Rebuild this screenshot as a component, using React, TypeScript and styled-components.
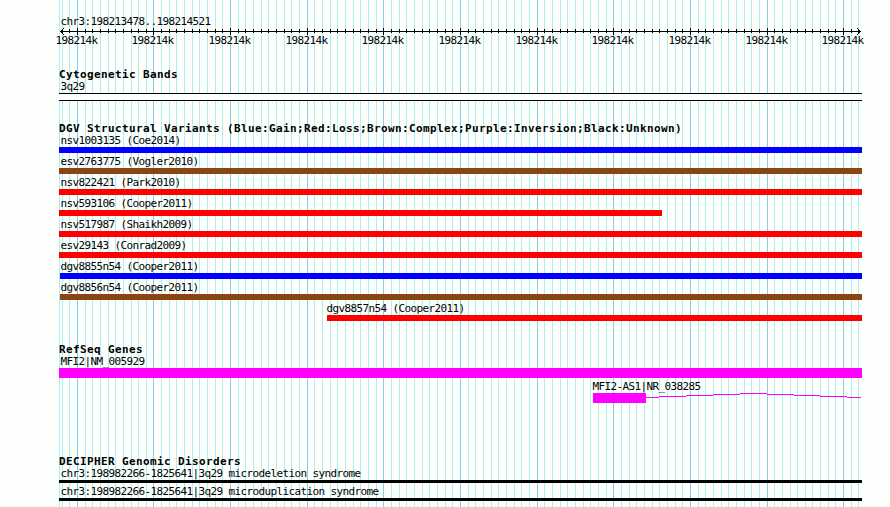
import React from "react";
import styled, { createGlobalStyle } from "styled-components";

interface Feature {
  label: string;
  color: string;
  start?: number;
  end?: number;
  labelOffset?: number;
  intron?: string;
}

interface TrackData {
  title: string;
  barHeight: number;
  gapBefore: number;
  features: Feature[];
}

const WIDTH = 890;
const HEIGHT = 507;
const LEFT = 59;
const RIGHT = 862;

const BACKGROUND = "#fdfffc";
const BLUE = "#0000ff";
const BROWN = "#8b4513";
const RED = "#ff0000";
const MAGENTA = "#ff00ff";
const BLACK = "#000000";

// 800 px cover 1044 bp, one grid line every 10 bp
const STEP = 8000 / 1044;
const FIRST_MAJOR = 76.361;

const gridLines = Array.from({ length: 105 }, (_, i) => {
  const k = i - 2;
  return { x: Math.ceil(FIRST_MAJOR + k * STEP), major: k % 10 === 0 };
});

const tracks: TrackData[] = [
  {
    title:
      "DGV Structural Variants (Blue:Gain;Red:Loss;Brown:Complex;Purple:Inversion;Black:Unknown)",
    barHeight: 6,
    gapBefore: 19,
    features: [
      { label: "nsv1003135 (Coe2014)", color: BLUE },
      { label: "esv2763775 (Vogler2010)", color: BROWN },
      { label: "nsv822421 (Park2010)", color: RED },
      { label: "nsv593106 (Cooper2011)", color: RED, end: 662 },
      { label: "nsv517987 (Shaikh2009)", color: RED },
      { label: "esv29143 (Conrad2009)", color: RED },
      { label: "dgv8855n54 (Cooper2011)", color: BLUE, start: 60, labelOffset: 0.5 },
      { label: "dgv8856n54 (Cooper2011)", color: BROWN, start: 60, labelOffset: 0.5 },
      { label: "dgv8857n54 (Cooper2011)", color: RED, start: 327, labelOffset: -0.5 },
    ],
  },
  {
    title: "RefSeq Genes",
    barHeight: 10,
    gapBefore: 20,
    features: [
      { label: "MFI2|NM_005929", color: MAGENTA },
      {
        label: "MFI2-AS1|NR_038285",
        color: MAGENTA,
        start: 593,
        end: 646,
        labelOffset: -0.5,
        intron:
          "M0 4.5H13M13 3.5H40M40 2.5H67M67 1.5H94M94 .5H121M121 1.5H148M148 2.5H174M174 3.5H201M201 4.5H215",
      },
    ],
  },
  {
    title: "DECIPHER Genomic Disorders",
    barHeight: 3,
    gapBefore: 50,
    features: [
      { label: "chr3:198982266-1825641|3q29 microdeletion syndrome", color: BLACK },
      { label: "chr3:198982266-1825641|3q29 microduplication syndrome", color: BLACK },
    ],
  },
];

const GlobalStyle = createGlobalStyle`
  html,
  body {
    margin: 0;
    background: ${BACKGROUND};
    overflow: hidden;
  }
`;

const Browser = styled.main`
  position: relative;
  box-sizing: border-box;
  width: ${WIDTH}px;
  height: ${HEIGHT}px;
  padding-top: 15px;
  overflow: hidden;
  background: ${BACKGROUND};
  color: ${BLACK};
  font-family: "DejaVu Sans Mono", "Liberation Mono", monospace;
  font-size: 11px;
  line-height: 14px;
`;

const GridLayer = styled.svg`
  position: absolute;
  inset: 0;
`;

const Content = styled.div`
  position: relative;
  display: flex;
  flex-direction: column;
`;

const Label = styled.div<{ $offset?: number }>`
  height: 12px;
  margin-left: ${(props) => props.$offset ?? 1.5}px;
  letter-spacing: -0.622px;
  white-space: pre;
`;

const RegionLabel = styled(Label)`
  margin-left: ${LEFT + 1.5}px;
`;

const RulerSvg = styled.svg`
  display: block;
  overflow: visible;

  text {
    letter-spacing: -0.622px;
  }
`;

const TrackSection = styled.section<{ $gap: number }>`
  margin-top: ${(props) => props.$gap}px;
`;

const TrackTitle = styled.h2`
  height: 12px;
  margin: 0 0 0 ${LEFT}px;
  font-size: 11px;
  font-weight: 700;
  letter-spacing: 0.378px;
  white-space: pre;
`;

const FeatureRow = styled.div<{ $start: number }>`
  margin: 0 0 2px ${(props) => props.$start}px;
`;

const Glyph = styled.div`
  display: flex;
  margin-top: 1px;
`;

const Bar = styled.div<{ $width: number; $height: number; $color: string }>`
  flex: none;
  width: ${(props) => props.$width}px;
  height: ${(props) => props.$height}px;
  background: ${(props) => props.$color};
`;

const Intron = styled.svg`
  flex: none;
`;

const CytoBand = styled.div`
  box-sizing: border-box;
  width: ${RIGHT - LEFT}px;
  height: 8px;
  margin-top: 1px;
  border: solid ${BLACK};
  border-width: 1px 0;
  background: ${BACKGROUND};
`;

const Grid: React.FC = () => (
  <GridLayer width={WIDTH} height={HEIGHT} shapeRendering="crispEdges">
    <rect x={LEFT} y={0} width={1} height={HEIGHT} fill="#afeeee" />
    {gridLines.map(({ x, major }) => (
      <rect
        key={x}
        x={x}
        y={0}
        width={1}
        height={HEIGHT}
        fill={major ? "#87ceeb" : "#afeeee"}
      />
    ))}
  </GridLayer>
);

const Ruler: React.FC = () => (
  <RulerSvg width={WIDTH} height={19}>
    <g shapeRendering="crispEdges">
      <rect x={60} y={4} width={801} height={1} />
      {gridLines.map(({ x, major }) => (
        <rect
          key={x}
          x={x}
          y={major ? 1 : 2}
          width={1}
          height={major ? 7 : 4}
        />
      ))}
    </g>
    <path
      d="M64 1L60.5 4.5L64 8M857 1L860.5 4.5L857 8"
      fill="none"
      stroke={BLACK}
    />
    {gridLines
      .filter(({ major }) => major)
      .map(({ x }) => (
        <text key={x} x={x - 21.5} y={17}>
          198214k
        </text>
      ))}
  </RulerSvg>
);

const FeatureGlyph: React.FC<{ feature: Feature; height: number }> = ({
  feature,
  height,
}) => {
  const { label, color, start = LEFT, end = RIGHT, labelOffset, intron } = feature;

  return (
    <FeatureRow $start={start}>
      <Label $offset={labelOffset}>{label}</Label>
      <Glyph>
        <Bar $width={end - start} $height={height} $color={color} />
        {intron && (
          <Intron width={215} height={height} shapeRendering="crispEdges">
            <path d={intron} fill="none" stroke={color} />
          </Intron>
        )}
      </Glyph>
    </FeatureRow>
  );
};

export default function App() {
  return (
    <>
      <GlobalStyle />
      <Browser>
        <Grid />
        <Content>
          <RegionLabel>chr3:198213478..198214521</RegionLabel>
          <Ruler />
          <TrackSection $gap={22}>
            <TrackTitle>Cytogenetic Bands</TrackTitle>
            <FeatureRow $start={LEFT}>
              <Label>3q29</Label>
              <CytoBand />
            </FeatureRow>
          </TrackSection>
          {tracks.map((track) => (
            <TrackSection key={track.title} $gap={track.gapBefore}>
              <TrackTitle>{track.title}</TrackTitle>
              {track.features.map((feature) => (
                <FeatureGlyph
                  key={feature.label}
                  feature={feature}
                  height={track.barHeight}
                />
              ))}
            </TrackSection>
          ))}
        </Content>
      </Browser>
    </>
  );
}
